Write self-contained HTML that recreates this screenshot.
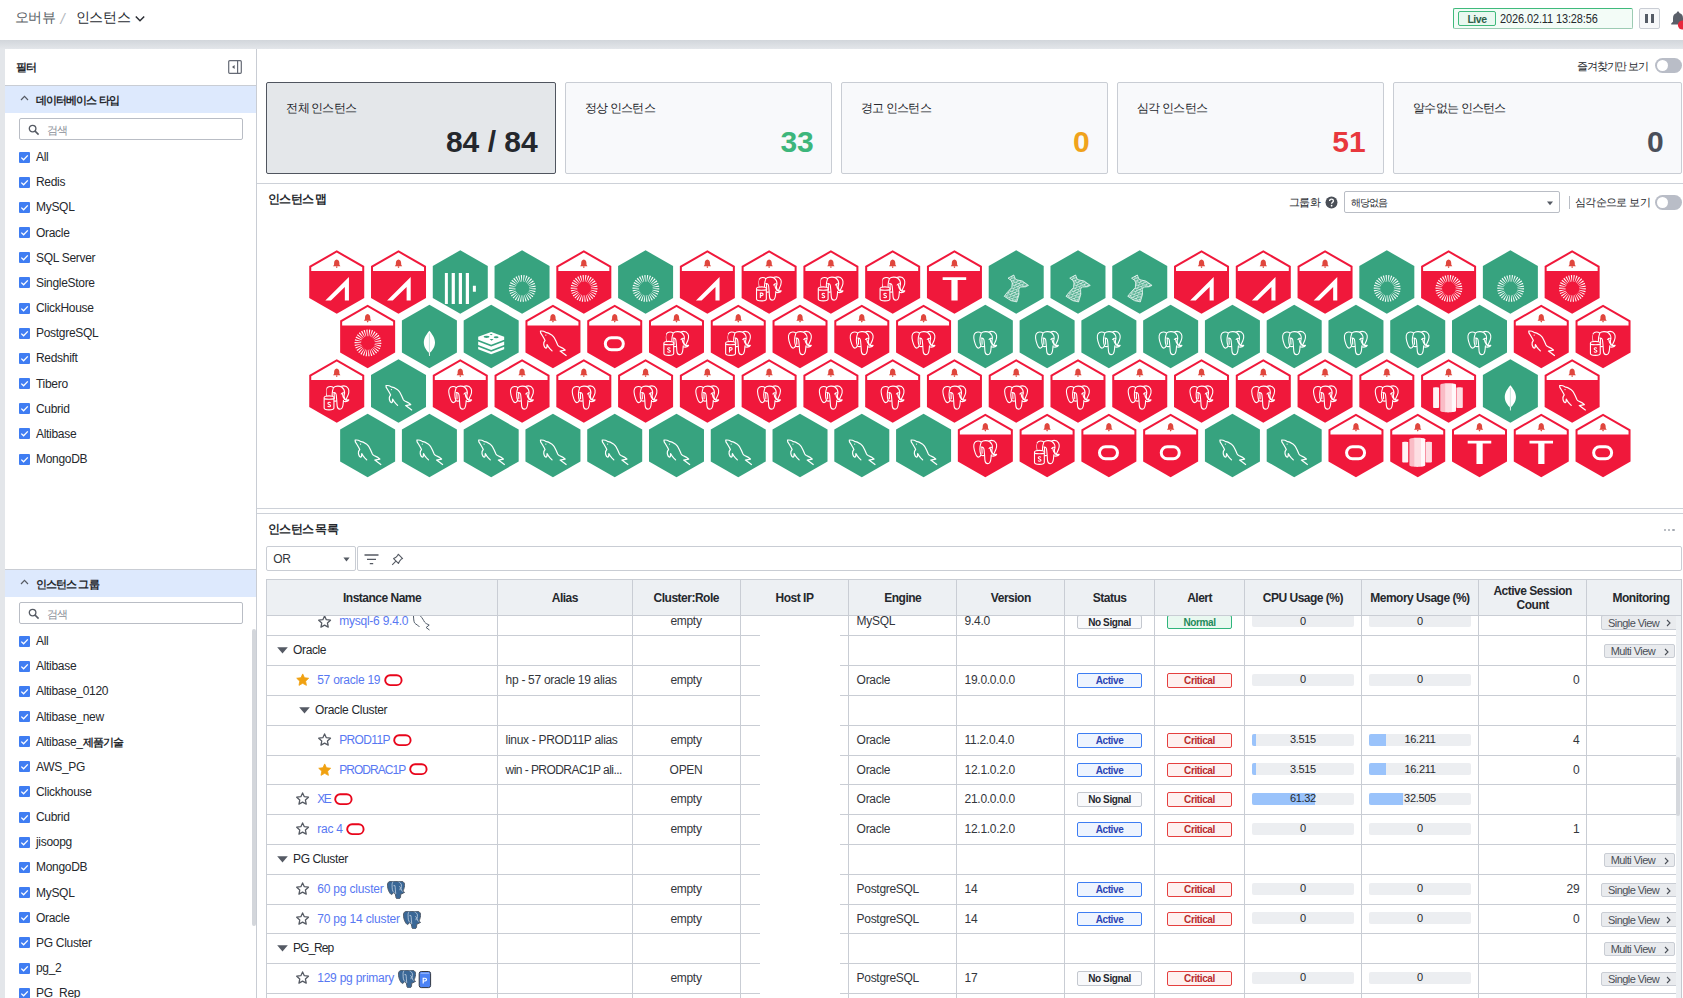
<!DOCTYPE html><html lang="ko"><head><meta charset="utf-8"><title>Instance Overview</title><style>
html,body{margin:0;padding:0}
body{width:1683px;height:998px;overflow:hidden;position:relative;background:#e3e6ea;
 font-family:"Liberation Sans",sans-serif;font-size:12px;color:#25282d;line-height:14px}
div,span,svg{position:absolute;box-sizing:border-box}
span{white-space:nowrap}
.t{letter-spacing:-.25px}
.b{font-weight:700}
#top{left:0;top:0;width:1683px;height:40px;background:#fff}
#shadow{left:0;top:40px;width:1683px;height:9px;background:linear-gradient(#d2d6db,#e3e6ea)}
#side{left:5px;top:49px;width:251px;height:949px;background:#fff}
#sideb{left:256px;top:49px;width:1px;height:949px;background:#c9cdd4}
#main{left:257px;top:49px;width:1426px;height:949px;background:#fff}
.sech{left:5px;width:251px;height:28px;background:#dde9fd;border-top:1px solid #c9cdd4}
.srch{left:19px;width:224px;height:22px;border:1px solid #b9bdc5;border-radius:2px;background:#fff}
.cb{left:19px;width:11px;height:11px;background:#3f7df2;border-radius:1px}
.cl{left:36px;font-size:12px;letter-spacing:-.3px;color:#25282d}
.card{top:82px;height:92px;background:#f8f9fb;border:1px solid #c9cdd4;border-radius:2px}
.card .lb{left:19px;top:18px;font-size:11.5px;letter-spacing:-.75px;color:#25282d}
.card .cv{right:17px;top:42px;font-size:30px;line-height:34px;font-weight:700}
.hl{height:1px;background:#cdd1d8}
.tg{width:27px;height:15px;border-radius:8px;background:#b9bdc7}
.tg i{position:absolute;left:2px;top:2px;width:11px;height:11px;border-radius:6px;background:#fff}

.th{top:579px;height:37px;background:#edf0f3;border-top:1px solid #c9cdd4;border-bottom:1px solid #c9cdd4;border-left:1px solid #c9cdd4}
.th span{left:0;width:100%;text-align:center;font-weight:700;font-size:12px;letter-spacing:-.5px;color:#25282d;white-space:normal}
.vl{width:1px;background:#c9cdd4}
.c{font-size:12px;letter-spacing:-.3px;color:#33363c}
.bd{height:14.5px;border:1px solid;border-radius:2px;font-size:10px;font-weight:700;text-align:center;line-height:14.5px;letter-spacing:-.38px;width:65px}
.bA{border-color:#3d7df2;background:#eef4fe;color:#2b45b2}
.bC{border-color:#e5403f;background:#fef1f0;color:#b82b2d}
.bN{border-color:#c4c8cf;background:#f8f9fb;color:#25282d}
.bO{border-color:#2fb57c;background:#e9f8f0;color:#1f8a5b}
.bar{height:12px;width:102px;background:#eceef1;border-radius:2px;overflow:hidden}
.bar i{position:absolute;left:0;top:0;height:100%;background:#9ac3fb}
.bt{font-size:11px;letter-spacing:-.3px;text-align:center;width:102px;color:#25282d}
.mv{height:14.5px;border:1px solid #c9cdd4;border-radius:2px;background:#e9ebee;font-size:11px;color:#4a4f57;letter-spacing:-.55px}
</style></head><body><div id="top"><span style="left:14.6px;top:8.3px;font-size:14px;line-height:18px;letter-spacing:-.5px;color:#5a5f66">오버뷰</span><span style="left:60.5px;top:10px;font-size:15px;line-height:18px;color:#b4b8be;font-style:italic">/</span><span style="left:75.7px;top:8.3px;font-size:14px;line-height:18px;letter-spacing:-.3px;color:#2a2d33">인스턴스</span><svg width="12" height="8" viewBox="0 0 12 8" style="left:134.3px;top:14.5px"><path d="M1.8 1.5 L6 5.7 L10.2 1.5" fill="none" stroke="#2a2d33" stroke-width="1.5"/></svg><div style="left:1453px;top:8px;width:180px;height:21px;background:#f3fcf7;border:1px solid #3fba7c;border-bottom-color:#9ccbb3;border-right-color:#9ccbb3;border-radius:2px"></div><div style="left:1458px;top:11px;width:38px;height:15px;background:#e9f8f0;border:1px solid #3fba7c;border-radius:2px"></div><span class="b" style="left:1458px;top:11.5px;width:38px;text-align:center;font-size:10.5px;color:#2f5f49;letter-spacing:-.45px">Live</span><span style="left:1500px;top:11.5px;font-size:12px;letter-spacing:-.1px;transform:scaleX(.911);transform-origin:0 0;color:#25282d">2026.02.11 13:28:56</span><div style="left:1639px;top:8px;width:21px;height:21px;background:#f7f8fa;border:1px solid #c9cdd4;border-radius:2px"></div><div style="left:1645px;top:13.5px;width:3.3px;height:9.5px;background:#555b66"></div><div style="left:1650.8px;top:13.5px;width:3.3px;height:9.5px;background:#555b66"></div><svg width="16" height="22" viewBox="0 0 16 22" style="left:1671px;top:10px"><path d="M7 1.6 C7.9 1.6 8.3 2.2 8.3 3 C10.8 3.6 12 5.6 12 8.2 L12 11.8 L13.8 13.6 L13.8 14.4 L0.2 14.4 L0.2 13.6 L2 11.8 L2 8.2 C2 5.6 3.2 3.6 5.7 3 C5.7 2.2 6.1 1.6 7 1.6 Z" fill="#5a5f69"/><circle cx="11.5" cy="15" r="4.6" fill="#e8283c"/></svg></div><div id="shadow"></div><div id="side"></div><div id="sideb"></div><div id="main"></div><span class="b" style="left:16px;top:60px;font-size:11px;letter-spacing:-.7px;color:#25282d">필터</span><svg width="14" height="14" viewBox="0 0 14 14" style="left:228px;top:60px"><rect x=".7" y=".7" width="12.6" height="12.6" rx="1" fill="none" stroke="#656a75" stroke-width="1.2"/><path d="M9.6 .7 V13.3" stroke="#656a75" stroke-width="1.2"/><path d="M6.6 4.9 L4 7 L6.6 9.1 Z" fill="#555a63"/></svg><div class="sech" style="top:85px"></div><svg width="9" height="6" viewBox="0 0 9 6" style="left:19.5px;top:95px"><path d="M1 5 L4.5 1.4 L8 5" fill="none" stroke="#555a63" stroke-width="1.2"/></svg><span class="b" style="left:36px;top:92.5px;font-size:11px;letter-spacing:-.92px;color:#25282d">데이터베이스 타입</span><div class="srch" style="top:118px"><svg width="12" height="12" viewBox="0 0 12 12" style="left:8px;top:4.5px"><circle cx="4.6" cy="4.6" r="3.3" fill="none" stroke="#555a63" stroke-width="1.3"/><path d="M7.1 7.1 L10.6 10.6" stroke="#555a63" stroke-width="1.5"/></svg><span style="left:27px;top:3.5px;color:#8a8f98;font-size:11px;letter-spacing:-1px">검색</span></div><div class="cb" style="top:151.5px"><svg width="11" height="11" viewBox="0 0 11 11" style="left:0;top:0"><path d="M2.3 5.6 L4.6 7.8 L8.8 3.4" fill="none" stroke="#fff" stroke-width="1.3"/></svg></div><span class="cl" style="top:150.0px">All</span><div class="cb" style="top:176.7px"><svg width="11" height="11" viewBox="0 0 11 11" style="left:0;top:0"><path d="M2.3 5.6 L4.6 7.8 L8.8 3.4" fill="none" stroke="#fff" stroke-width="1.3"/></svg></div><span class="cl" style="top:175.2px">Redis</span><div class="cb" style="top:201.8px"><svg width="11" height="11" viewBox="0 0 11 11" style="left:0;top:0"><path d="M2.3 5.6 L4.6 7.8 L8.8 3.4" fill="none" stroke="#fff" stroke-width="1.3"/></svg></div><span class="cl" style="top:200.3px">MySQL</span><div class="cb" style="top:227.0px"><svg width="11" height="11" viewBox="0 0 11 11" style="left:0;top:0"><path d="M2.3 5.6 L4.6 7.8 L8.8 3.4" fill="none" stroke="#fff" stroke-width="1.3"/></svg></div><span class="cl" style="top:225.5px">Oracle</span><div class="cb" style="top:252.2px"><svg width="11" height="11" viewBox="0 0 11 11" style="left:0;top:0"><path d="M2.3 5.6 L4.6 7.8 L8.8 3.4" fill="none" stroke="#fff" stroke-width="1.3"/></svg></div><span class="cl" style="top:250.7px">SQL Server</span><div class="cb" style="top:277.4px"><svg width="11" height="11" viewBox="0 0 11 11" style="left:0;top:0"><path d="M2.3 5.6 L4.6 7.8 L8.8 3.4" fill="none" stroke="#fff" stroke-width="1.3"/></svg></div><span class="cl" style="top:275.9px">SingleStore</span><div class="cb" style="top:302.5px"><svg width="11" height="11" viewBox="0 0 11 11" style="left:0;top:0"><path d="M2.3 5.6 L4.6 7.8 L8.8 3.4" fill="none" stroke="#fff" stroke-width="1.3"/></svg></div><span class="cl" style="top:301.0px">ClickHouse</span><div class="cb" style="top:327.7px"><svg width="11" height="11" viewBox="0 0 11 11" style="left:0;top:0"><path d="M2.3 5.6 L4.6 7.8 L8.8 3.4" fill="none" stroke="#fff" stroke-width="1.3"/></svg></div><span class="cl" style="top:326.2px">PostgreSQL</span><div class="cb" style="top:352.9px"><svg width="11" height="11" viewBox="0 0 11 11" style="left:0;top:0"><path d="M2.3 5.6 L4.6 7.8 L8.8 3.4" fill="none" stroke="#fff" stroke-width="1.3"/></svg></div><span class="cl" style="top:351.4px">Redshift</span><div class="cb" style="top:378.0px"><svg width="11" height="11" viewBox="0 0 11 11" style="left:0;top:0"><path d="M2.3 5.6 L4.6 7.8 L8.8 3.4" fill="none" stroke="#fff" stroke-width="1.3"/></svg></div><span class="cl" style="top:376.5px">Tibero</span><div class="cb" style="top:403.2px"><svg width="11" height="11" viewBox="0 0 11 11" style="left:0;top:0"><path d="M2.3 5.6 L4.6 7.8 L8.8 3.4" fill="none" stroke="#fff" stroke-width="1.3"/></svg></div><span class="cl" style="top:401.7px">Cubrid</span><div class="cb" style="top:428.4px"><svg width="11" height="11" viewBox="0 0 11 11" style="left:0;top:0"><path d="M2.3 5.6 L4.6 7.8 L8.8 3.4" fill="none" stroke="#fff" stroke-width="1.3"/></svg></div><span class="cl" style="top:426.9px">Altibase</span><div class="cb" style="top:453.5px"><svg width="11" height="11" viewBox="0 0 11 11" style="left:0;top:0"><path d="M2.3 5.6 L4.6 7.8 L8.8 3.4" fill="none" stroke="#fff" stroke-width="1.3"/></svg></div><span class="cl" style="top:452.0px">MongoDB</span><div class="sech" style="top:569px"></div><svg width="9" height="6" viewBox="0 0 9 6" style="left:19.5px;top:579px"><path d="M1 5 L4.5 1.4 L8 5" fill="none" stroke="#555a63" stroke-width="1.2"/></svg><span class="b" style="left:36px;top:576.5px;font-size:11px;letter-spacing:-.92px;color:#25282d">인스턴스 그룹</span><div class="srch" style="top:602px"><svg width="12" height="12" viewBox="0 0 12 12" style="left:8px;top:4.5px"><circle cx="4.6" cy="4.6" r="3.3" fill="none" stroke="#555a63" stroke-width="1.3"/><path d="M7.1 7.1 L10.6 10.6" stroke="#555a63" stroke-width="1.5"/></svg><span style="left:27px;top:3.5px;color:#8a8f98;font-size:11px;letter-spacing:-1px">검색</span></div><div class="cb" style="top:635.5px"><svg width="11" height="11" viewBox="0 0 11 11" style="left:0;top:0"><path d="M2.3 5.6 L4.6 7.8 L8.8 3.4" fill="none" stroke="#fff" stroke-width="1.3"/></svg></div><span class="cl" style="top:634.0px">All</span><div class="cb" style="top:660.6px"><svg width="11" height="11" viewBox="0 0 11 11" style="left:0;top:0"><path d="M2.3 5.6 L4.6 7.8 L8.8 3.4" fill="none" stroke="#fff" stroke-width="1.3"/></svg></div><span class="cl" style="top:659.1px">Altibase</span><div class="cb" style="top:685.8px"><svg width="11" height="11" viewBox="0 0 11 11" style="left:0;top:0"><path d="M2.3 5.6 L4.6 7.8 L8.8 3.4" fill="none" stroke="#fff" stroke-width="1.3"/></svg></div><span class="cl" style="top:684.3px">Altibase_0120</span><div class="cb" style="top:711.0px"><svg width="11" height="11" viewBox="0 0 11 11" style="left:0;top:0"><path d="M2.3 5.6 L4.6 7.8 L8.8 3.4" fill="none" stroke="#fff" stroke-width="1.3"/></svg></div><span class="cl" style="top:709.5px">Altibase_new</span><div class="cb" style="top:736.1px"><svg width="11" height="11" viewBox="0 0 11 11" style="left:0;top:0"><path d="M2.3 5.6 L4.6 7.8 L8.8 3.4" fill="none" stroke="#fff" stroke-width="1.3"/></svg></div><span class="cl" style="top:734.6px">Altibase_<b style="font-size:11px;letter-spacing:-.9px">제품기술</b></span><div class="cb" style="top:761.2px"><svg width="11" height="11" viewBox="0 0 11 11" style="left:0;top:0"><path d="M2.3 5.6 L4.6 7.8 L8.8 3.4" fill="none" stroke="#fff" stroke-width="1.3"/></svg></div><span class="cl" style="top:759.8px">AWS_PG</span><div class="cb" style="top:786.4px"><svg width="11" height="11" viewBox="0 0 11 11" style="left:0;top:0"><path d="M2.3 5.6 L4.6 7.8 L8.8 3.4" fill="none" stroke="#fff" stroke-width="1.3"/></svg></div><span class="cl" style="top:784.9px">Clickhouse</span><div class="cb" style="top:811.5px"><svg width="11" height="11" viewBox="0 0 11 11" style="left:0;top:0"><path d="M2.3 5.6 L4.6 7.8 L8.8 3.4" fill="none" stroke="#fff" stroke-width="1.3"/></svg></div><span class="cl" style="top:810.0px">Cubrid</span><div class="cb" style="top:836.7px"><svg width="11" height="11" viewBox="0 0 11 11" style="left:0;top:0"><path d="M2.3 5.6 L4.6 7.8 L8.8 3.4" fill="none" stroke="#fff" stroke-width="1.3"/></svg></div><span class="cl" style="top:835.2px">jisoopg</span><div class="cb" style="top:861.9px"><svg width="11" height="11" viewBox="0 0 11 11" style="left:0;top:0"><path d="M2.3 5.6 L4.6 7.8 L8.8 3.4" fill="none" stroke="#fff" stroke-width="1.3"/></svg></div><span class="cl" style="top:860.4px">MongoDB</span><div class="cb" style="top:887.0px"><svg width="11" height="11" viewBox="0 0 11 11" style="left:0;top:0"><path d="M2.3 5.6 L4.6 7.8 L8.8 3.4" fill="none" stroke="#fff" stroke-width="1.3"/></svg></div><span class="cl" style="top:885.5px">MySQL</span><div class="cb" style="top:912.1px"><svg width="11" height="11" viewBox="0 0 11 11" style="left:0;top:0"><path d="M2.3 5.6 L4.6 7.8 L8.8 3.4" fill="none" stroke="#fff" stroke-width="1.3"/></svg></div><span class="cl" style="top:910.6px">Oracle</span><div class="cb" style="top:937.3px"><svg width="11" height="11" viewBox="0 0 11 11" style="left:0;top:0"><path d="M2.3 5.6 L4.6 7.8 L8.8 3.4" fill="none" stroke="#fff" stroke-width="1.3"/></svg></div><span class="cl" style="top:935.8px">PG Cluster</span><div class="cb" style="top:962.5px"><svg width="11" height="11" viewBox="0 0 11 11" style="left:0;top:0"><path d="M2.3 5.6 L4.6 7.8 L8.8 3.4" fill="none" stroke="#fff" stroke-width="1.3"/></svg></div><span class="cl" style="top:961.0px">pg_2</span><div class="cb" style="top:987.6px"><svg width="11" height="11" viewBox="0 0 11 11" style="left:0;top:0"><path d="M2.3 5.6 L4.6 7.8 L8.8 3.4" fill="none" stroke="#fff" stroke-width="1.3"/></svg></div><span class="cl" style="top:986.1px">PG_Rep</span><div style="left:252.3px;top:629px;width:3.6px;height:297px;border-radius:2px;background:#d3d6db"></div><span style="right:35px;top:59px;font-size:10.5px;letter-spacing:-1.1px;color:#25282d">즐겨찾기만 보기</span><div class="tg" style="left:1655px;top:58px"><i></i></div><div class="card" style="left:266.3px;width:289.4px;background:#e4e7ea;border-color:#50555f;"><span class="lb">전체 인스턴스</span><span class="cv" style="color:#25282d">84 / 84</span></div><div class="card" style="left:565px;width:266.8px;"><span class="lb">정상 인스턴스</span><span class="cv" style="color:#3db67b">33</span></div><div class="card" style="left:841px;width:266.8px;"><span class="lb">경고 인스턴스</span><span class="cv" style="color:#f0a31c">0</span></div><div class="card" style="left:1117.2px;width:266.5px;"><span class="lb">심각 인스턴스</span><span class="cv" style="color:#e8383d">51</span></div><div class="card" style="left:1393.2px;width:288.5px;"><span class="lb">알수없는 인스턴스</span><span class="cv" style="color:#4a4f5a">0</span></div><div class="hl" style="left:257px;top:183px;width:1426px"></div><span class="b" style="left:268px;top:192px;font-size:11.5px;letter-spacing:-.75px">인스턴스 맵</span><span style="right:363px;top:195px;font-size:11px;letter-spacing:-.6px">그룹화</span><svg width="13" height="13" viewBox="0 0 13 13" style="left:1325.4px;top:195.5px"><circle cx="6.5" cy="6.5" r="6" fill="#4a4f57"/><path d="M4.6 5.1 C4.6 3.9 5.4 3.2 6.5 3.2 C7.6 3.2 8.4 3.9 8.4 4.9 C8.4 6.2 6.6 6.3 6.6 7.7" fill="none" stroke="#fff" stroke-width="1.3"/><circle cx="6.6" cy="9.7" r=".85" fill="#fff"/></svg><div style="left:1344px;top:191px;width:215.6px;height:22px;border:1px solid #b9bdc5;border-radius:2px;background:#fff"><span style="left:5.5px;top:3.5px;font-size:10px;letter-spacing:-.7px;color:#25282d">해당없음</span><svg width="8" height="5" viewBox="0 0 8 5" style="left:200.5px;top:8.5px"><path d="M1 .6 H7 L4 4.2 Z" fill="#555a63"/></svg></div><div style="left:1569px;top:196px;width:1px;height:13px;background:#b9bdc5"></div><span style="right:33px;top:195px;font-size:10.5px;letter-spacing:-.6px">심각순으로 보기</span><div class="tg" style="left:1655.3px;top:194.5px"><i></i></div><div class="hl" style="left:257px;top:508px;width:1426px"></div><div class="hl" style="left:257px;top:513px;width:1426px"></div><svg width="1683" height="998" viewBox="0 0 1683 998" style="left:0;top:0"><defs><pattern id="mesh" width="3.3" height="3.3" patternUnits="userSpaceOnUse" patternTransform="rotate(24)"><rect width="3.3" height="3.3" fill="#fff" fill-opacity=".16"/><path d="M0,0 H3.3 M0,0 V3.3 M0,3.3 L3.3,0" stroke="#fff" stroke-width=".62" stroke-opacity=".95"/></pattern><g id="hR"><polygon points="0,-31.75 27.50,-15.88 27.50,15.88 0,31.75 -27.50,15.88 -27.50,-15.88" fill="#f0183b"/><polygon points="0,-29.44 25.50,-14.72 25.50,-11.1 -25.50,-11.1 -25.50,-14.72" fill="#fff"/><path d="M0,-22.6 C1.9,-22.4 2.6,-20.8 2.6,-19.2 L2.7,-17.3 L3.7,-15.7 L-3.7,-15.7 L-2.7,-17.3 L-2.6,-19.2 C-2.6,-20.8 -1.9,-22.4 0,-22.6 Z" fill="#e0463d"/><circle cx="0" cy="-14.9" r=".8" fill="#e0463d"/></g><g id="hG"><polygon points="0,-31.75 27.50,-15.88 27.50,15.88 0,31.75 -27.50,15.88 -27.50,-15.88" fill="#37a37f"/></g><g id="altiR"><path d="M-11.4,18.6 L12.2,-5.1 L12.2,18.6 L8.1,18.6 L8.1,5.1 L-5.8,18.6 Z" fill="#fff"/></g><g id="altiG"><path d="M-11.4,18.6 L12.2,-5.1 L12.2,18.6 L8.1,18.6 L8.1,5.1 L-5.8,18.6 Z" fill="#fff"/></g><g id="clickR"><path d="M-15.4,-9 h3v31h-3z M-8.6,-9 h3.2v31h-3.2z M-1.5,-9 h3.2v31h-3.2z M5.5,-9 h3.2v31h-3.2z M12.6,3.8 h3v5.9h-3z" fill="#fff"/></g><g id="clickG"><path d="M-15.4,-9 h3v31h-3z M-8.6,-9 h3.2v31h-3.2z M-1.5,-9 h3.2v31h-3.2z M5.5,-9 h3.2v31h-3.2z M12.6,3.8 h3v5.9h-3z" fill="#fff"/></g><g id="cubridR"><path d="M7.09,6.85L13.67,7.49L13.71,6.21L7.10,6.45ZM6.86,8.26L13.17,10.25L13.47,9.01L6.95,7.87ZM6.34,9.58L12.09,12.84L12.65,11.69L6.51,9.22ZM5.56,10.77L10.51,15.15L11.29,14.14L5.80,10.45ZM4.54,11.77L8.48,17.09L9.45,16.26L4.85,11.51ZM3.35,12.53L6.09,18.55L7.21,17.95L3.70,12.34ZM2.01,13.03L3.44,19.49L4.67,19.13L2.40,12.92ZM0.61,13.25L0.66,19.86L1.94,19.76L1.01,13.22ZM-0.81,13.16L-2.13,19.64L-0.87,19.81L-0.42,13.22ZM-2.18,12.78L-4.82,18.85L-3.62,19.28L-1.81,12.92ZM-3.45,12.13L-7.29,17.51L-6.20,18.19L-3.10,12.34ZM-4.54,11.23L-9.42,15.69L-8.50,16.58L-4.26,11.50ZM-5.43,10.11L-11.13,13.47L-10.41,14.53L-5.21,10.45ZM-6.07,8.84L-12.34,10.94L-11.86,12.12L-5.92,9.21ZM-6.43,7.47L-13.00,8.21L-12.77,9.47L-6.36,7.86ZM-6.49,6.05L-13.07,5.41L-13.11,6.69L-6.50,6.45ZM-6.26,4.64L-12.57,2.65L-12.87,3.89L-6.35,5.03ZM-5.74,3.32L-11.49,0.06L-12.05,1.21L-5.91,3.68ZM-4.96,2.13L-9.91,-2.25L-10.69,-1.24L-5.20,2.45ZM-3.94,1.13L-7.88,-4.19L-8.85,-3.36L-4.25,1.39ZM-2.75,0.37L-5.49,-5.65L-6.61,-5.05L-3.10,0.56ZM-1.41,-0.13L-2.84,-6.59L-4.07,-6.23L-1.80,-0.02ZM-0.01,-0.35L-0.06,-6.96L-1.34,-6.86L-0.41,-0.32ZM1.41,-0.26L2.73,-6.74L1.47,-6.91L1.02,-0.32ZM2.78,0.12L5.42,-5.95L4.22,-6.38L2.41,-0.02ZM4.05,0.77L7.89,-4.61L6.80,-5.29L3.70,0.56ZM5.14,1.67L10.02,-2.79L9.10,-3.68L4.86,1.40ZM6.03,2.79L11.73,-0.57L11.01,-1.63L5.81,2.45ZM6.67,4.06L12.94,1.96L12.46,0.78L6.52,3.69ZM7.03,5.43L13.60,4.69L13.37,3.43L6.96,5.04Z" fill="#fff"/></g><g id="cubridG"><path d="M7.09,6.85L13.67,7.49L13.71,6.21L7.10,6.45ZM6.86,8.26L13.17,10.25L13.47,9.01L6.95,7.87ZM6.34,9.58L12.09,12.84L12.65,11.69L6.51,9.22ZM5.56,10.77L10.51,15.15L11.29,14.14L5.80,10.45ZM4.54,11.77L8.48,17.09L9.45,16.26L4.85,11.51ZM3.35,12.53L6.09,18.55L7.21,17.95L3.70,12.34ZM2.01,13.03L3.44,19.49L4.67,19.13L2.40,12.92ZM0.61,13.25L0.66,19.86L1.94,19.76L1.01,13.22ZM-0.81,13.16L-2.13,19.64L-0.87,19.81L-0.42,13.22ZM-2.18,12.78L-4.82,18.85L-3.62,19.28L-1.81,12.92ZM-3.45,12.13L-7.29,17.51L-6.20,18.19L-3.10,12.34ZM-4.54,11.23L-9.42,15.69L-8.50,16.58L-4.26,11.50ZM-5.43,10.11L-11.13,13.47L-10.41,14.53L-5.21,10.45ZM-6.07,8.84L-12.34,10.94L-11.86,12.12L-5.92,9.21ZM-6.43,7.47L-13.00,8.21L-12.77,9.47L-6.36,7.86ZM-6.49,6.05L-13.07,5.41L-13.11,6.69L-6.50,6.45ZM-6.26,4.64L-12.57,2.65L-12.87,3.89L-6.35,5.03ZM-5.74,3.32L-11.49,0.06L-12.05,1.21L-5.91,3.68ZM-4.96,2.13L-9.91,-2.25L-10.69,-1.24L-5.20,2.45ZM-3.94,1.13L-7.88,-4.19L-8.85,-3.36L-4.25,1.39ZM-2.75,0.37L-5.49,-5.65L-6.61,-5.05L-3.10,0.56ZM-1.41,-0.13L-2.84,-6.59L-4.07,-6.23L-1.80,-0.02ZM-0.01,-0.35L-0.06,-6.96L-1.34,-6.86L-0.41,-0.32ZM1.41,-0.26L2.73,-6.74L1.47,-6.91L1.02,-0.32ZM2.78,0.12L5.42,-5.95L4.22,-6.38L2.41,-0.02ZM4.05,0.77L7.89,-4.61L6.80,-5.29L3.70,0.56ZM5.14,1.67L10.02,-2.79L9.10,-3.68L4.86,1.40ZM6.03,2.79L11.73,-0.57L11.01,-1.63L5.81,2.45ZM6.67,4.06L12.94,1.96L12.46,0.78L6.52,3.69ZM7.03,5.43L13.60,4.69L13.37,3.43L6.96,5.04Z" fill="#fff"/></g><g id="mongoR"><path d="M0,-5.8 C2.2,-3 5.6,1 5.6,6 C5.6,11 2.4,14.6 .5,16.2 L.4,19.6 L-.4,19.6 L-.5,16.2 C-2.4,14.6 -5.6,11 -5.6,6 C-5.6,1 -2.2,-3 0,-5.8 Z" fill="#fff"/><path d="M0,-3 V16" stroke="#f0183b" stroke-width=".5" opacity=".55"/></g><g id="mongoG"><path d="M0,-5.8 C2.2,-3 5.6,1 5.6,6 C5.6,11 2.4,14.6 .5,16.2 L.4,19.6 L-.4,19.6 L-.5,16.2 C-2.4,14.6 -5.6,11 -5.6,6 C-5.6,1 -2.2,-3 0,-5.8 Z" fill="#fff"/><path d="M0,-3 V16" stroke="#37a37f" stroke-width=".5" opacity=".55"/></g><g id="redisR"><path d="M-13,.2 L0,-4.6 L13,.2 L13,3.2 L0,8.2 L-13,3.2 Z" fill="#fff"/><path d="M-13,5 L0,10 L13,5 L13,8.4 L0,13.4 L-13,8.4 Z" fill="#fff"/><path d="M-13,10.2 L0,15.2 L13,10.2 L13,12.8 L0,17.8 L-13,12.8 Z" fill="#fff"/><ellipse cx="-4.6" cy=".3" rx="3" ry="1.15" fill="#f0183b"/><ellipse cx="5" cy=".8" rx="2.4" ry="1" fill="#f0183b"/><path d="M-1.6,-2.6 L1.6,-2.6 L0,-1.2 Z M-1.5,2.4 L2.4,2.6 L.4,4.2 Z" fill="#f0183b"/></g><g id="redisG"><path d="M-13,.2 L0,-4.6 L13,.2 L13,3.2 L0,8.2 L-13,3.2 Z" fill="#fff"/><path d="M-13,5 L0,10 L13,5 L13,8.4 L0,13.4 L-13,8.4 Z" fill="#fff"/><path d="M-13,10.2 L0,15.2 L13,10.2 L13,12.8 L0,17.8 L-13,12.8 Z" fill="#fff"/><ellipse cx="-4.6" cy=".3" rx="3" ry="1.15" fill="#37a37f"/><ellipse cx="5" cy=".8" rx="2.4" ry="1" fill="#37a37f"/><path d="M-1.6,-2.6 L1.6,-2.6 L0,-1.2 Z M-1.5,2.4 L2.4,2.6 L.4,4.2 Z" fill="#37a37f"/></g><g id="mysqlR"><path d="M-12.5,-5.4 C-10.5,-5.8 -8.5,-5 -7.3,-4.2 C-5,-4 -3,-2.8 -1.3,-1.6 C0,-.4 1,.6 1.3,1.2 L3.1,4.8 L4.75,8.4 C5.2,9.3 5.8,9.7 6.35,10 L9.6,11.6 L12.2,13.6 L7.15,14.6 L13.2,19 M-12.5,-5.4 L-12.3,-3.6 L-10.5,-.8 L-8.9,2 L-7.9,4 C-8.6,5 -9.1,5.6 -9.1,6.4 C-9.3,7.5 -9.2,8.4 -8.9,9.2 C-8.5,10.4 -8,11.2 -7.3,11.6 C-6.8,11.7 -6.3,11.3 -6.1,10.8 L-5.9,8 L-4.5,10.4 L-2.9,12.4 L-.9,14.4" fill="none" stroke="#fff" stroke-width="1.2" stroke-linejoin="round" stroke-linecap="round"/><circle cx="-7.1" cy="-1.4" r=".6" fill="#fff"/></g><g id="mysqlG"><path d="M-12.5,-5.4 C-10.5,-5.8 -8.5,-5 -7.3,-4.2 C-5,-4 -3,-2.8 -1.3,-1.6 C0,-.4 1,.6 1.3,1.2 L3.1,4.8 L4.75,8.4 C5.2,9.3 5.8,9.7 6.35,10 L9.6,11.6 L12.2,13.6 L7.15,14.6 L13.2,19 M-12.5,-5.4 L-12.3,-3.6 L-10.5,-.8 L-8.9,2 L-7.9,4 C-8.6,5 -9.1,5.6 -9.1,6.4 C-9.3,7.5 -9.2,8.4 -8.9,9.2 C-8.5,10.4 -8,11.2 -7.3,11.6 C-6.8,11.7 -6.3,11.3 -6.1,10.8 L-5.9,8 L-4.5,10.4 L-2.9,12.4 L-.9,14.4" fill="none" stroke="#fff" stroke-width="1.2" stroke-linejoin="round" stroke-linecap="round"/><circle cx="-7.1" cy="-1.4" r=".6" fill="#fff"/></g><g id="oracleR"><rect x="-9.4" y="1.2" width="18" height="12" rx="6" fill="none" stroke="#fff" stroke-width="3"/></g><g id="oracleG"><rect x="-9.4" y="1.2" width="18" height="12" rx="6" fill="none" stroke="#fff" stroke-width="3"/></g><g id="pgR"><path transform="translate(0,6.6) scale(.955) translate(0,-6.6)" d="M-4.3,-3.9 C-6,-5.5 -9.6,-5.7 -11.3,-3.2 C-12.6,-1.2 -12,3.5 -10.4,8 C-9.3,11 -7.8,12.4 -6.4,11.6 C-5.2,10.9 -4.8,9.9 -4.6,9.4 C-5.7,6.5 -6.2,1.5 -4.3,-3.9 Z M-4.3,-3.9 C-2.2,-5.7 2.2,-5.9 4.6,-4.3 C6.6,-2.9 7.5,-0.4 7.4,2 M-4.6,9.4 C-3.4,10.7 -1.6,10.5 -0.8,9.7 L-0.5,14.5 C-0.3,17.5 0.8,18.7 2.5,18.7 C4.7,18.7 5.6,16.4 5.9,13 L6.2,9.4 M-4.1,1.3 C-2.6,.9 -1.4,2.3 -1.3,4.4 L-.8,9.7 M-3.6,2 L-3.4,7.8 M3.9,2.8 C5,1.4 6.6,1.5 7.4,2 C6.4,4.4 7.1,7.4 8.6,9.2 M5.2,2.9 C5.2,4.6 6,6.8 7.4,8.6 M3.4,-5 C6,-5.9 9.6,-5.7 11.2,-3 C12.4,-.8 11.4,3.6 9.6,7 C9,8.2 8.7,8.8 8.6,9.2 L11.8,9 C10.8,10.8 8,11.3 6.2,10.3" fill="none" stroke="#fff" stroke-width="1.15" stroke-linejoin="round" stroke-linecap="round"/></g><g id="pgG"><path transform="translate(0,6.6) scale(.955) translate(0,-6.6)" d="M-4.3,-3.9 C-6,-5.5 -9.6,-5.7 -11.3,-3.2 C-12.6,-1.2 -12,3.5 -10.4,8 C-9.3,11 -7.8,12.4 -6.4,11.6 C-5.2,10.9 -4.8,9.9 -4.6,9.4 C-5.7,6.5 -6.2,1.5 -4.3,-3.9 Z M-4.3,-3.9 C-2.2,-5.7 2.2,-5.9 4.6,-4.3 C6.6,-2.9 7.5,-0.4 7.4,2 M-4.6,9.4 C-3.4,10.7 -1.6,10.5 -0.8,9.7 L-0.5,14.5 C-0.3,17.5 0.8,18.7 2.5,18.7 C4.7,18.7 5.6,16.4 5.9,13 L6.2,9.4 M-4.1,1.3 C-2.6,.9 -1.4,2.3 -1.3,4.4 L-.8,9.7 M-3.6,2 L-3.4,7.8 M3.9,2.8 C5,1.4 6.6,1.5 7.4,2 C6.4,4.4 7.1,7.4 8.6,9.2 M5.2,2.9 C5.2,4.6 6,6.8 7.4,8.6 M3.4,-5 C6,-5.9 9.6,-5.7 11.2,-3 C12.4,-.8 11.4,3.6 9.6,7 C9,8.2 8.7,8.8 8.6,9.2 L11.8,9 C10.8,10.8 8,11.3 6.2,10.3" fill="none" stroke="#fff" stroke-width="1.15" stroke-linejoin="round" stroke-linecap="round"/></g><g id="pgSR"><g transform="translate(.8,0)"><path transform="translate(0,6.6) scale(.955) translate(0,-6.6)" d="M-4.3,-3.9 C-6,-5.5 -9.6,-5.7 -11.3,-3.2 C-12.6,-1.2 -12,3.5 -10.4,8 C-9.3,11 -7.8,12.4 -6.4,11.6 C-5.2,10.9 -4.8,9.9 -4.6,9.4 C-5.7,6.5 -6.2,1.5 -4.3,-3.9 Z M-4.3,-3.9 C-2.2,-5.7 2.2,-5.9 4.6,-4.3 C6.6,-2.9 7.5,-0.4 7.4,2 M-4.6,9.4 C-3.4,10.7 -1.6,10.5 -0.8,9.7 L-0.5,14.5 C-0.3,17.5 0.8,18.7 2.5,18.7 C4.7,18.7 5.6,16.4 5.9,13 L6.2,9.4 M-4.1,1.3 C-2.6,.9 -1.4,2.3 -1.3,4.4 L-.8,9.7 M-3.6,2 L-3.4,7.8 M3.9,2.8 C5,1.4 6.6,1.5 7.4,2 C6.4,4.4 7.1,7.4 8.6,9.2 M5.2,2.9 C5.2,4.6 6,6.8 7.4,8.6 M3.4,-5 C6,-5.9 9.6,-5.7 11.2,-3 C12.4,-.8 11.4,3.6 9.6,7 C9,8.2 8.7,8.8 8.6,9.2 L11.8,9 C10.8,10.8 8,11.3 6.2,10.3" fill="none" stroke="#fff" stroke-width="1.15" stroke-linejoin="round" stroke-linecap="round"/></g><path d="M-11.3,-3 C-12,-1 -12,2 -11.6,5.4" fill="none" stroke="#f0183b" stroke-width="2.2"/><path d="M-12.6,6.4 C-12.6,5.2 -10,4.9 -7.7,4.9 C-5.4,4.9 -2.8,5.2 -2.8,6.4 L-2.8,17 C-2.8,18.4 -5.4,18.9 -7.7,18.9 C-10,18.9 -12.6,18.4 -12.6,17 Z" fill="#f0183b" stroke="#fff" stroke-width="1.1"/><path d="M-12.6,7.9 C-10,8.3 -5.4,8.3 -2.8,7.9" fill="none" stroke="#fff" stroke-width="1.1"/><path d="M-6.2,11.9 C-6.8,11 -8.9,11 -8.9,12.3 C-8.9,13.6 -6.1,13.2 -6.1,14.7 C-6.1,16 -8.5,16 -9.1,15" fill="none" stroke="#fff" stroke-width="1.05"/></g><g id="pgSG"><g transform="translate(.8,0)"><path transform="translate(0,6.6) scale(.955) translate(0,-6.6)" d="M-4.3,-3.9 C-6,-5.5 -9.6,-5.7 -11.3,-3.2 C-12.6,-1.2 -12,3.5 -10.4,8 C-9.3,11 -7.8,12.4 -6.4,11.6 C-5.2,10.9 -4.8,9.9 -4.6,9.4 C-5.7,6.5 -6.2,1.5 -4.3,-3.9 Z M-4.3,-3.9 C-2.2,-5.7 2.2,-5.9 4.6,-4.3 C6.6,-2.9 7.5,-0.4 7.4,2 M-4.6,9.4 C-3.4,10.7 -1.6,10.5 -0.8,9.7 L-0.5,14.5 C-0.3,17.5 0.8,18.7 2.5,18.7 C4.7,18.7 5.6,16.4 5.9,13 L6.2,9.4 M-4.1,1.3 C-2.6,.9 -1.4,2.3 -1.3,4.4 L-.8,9.7 M-3.6,2 L-3.4,7.8 M3.9,2.8 C5,1.4 6.6,1.5 7.4,2 C6.4,4.4 7.1,7.4 8.6,9.2 M5.2,2.9 C5.2,4.6 6,6.8 7.4,8.6 M3.4,-5 C6,-5.9 9.6,-5.7 11.2,-3 C12.4,-.8 11.4,3.6 9.6,7 C9,8.2 8.7,8.8 8.6,9.2 L11.8,9 C10.8,10.8 8,11.3 6.2,10.3" fill="none" stroke="#fff" stroke-width="1.15" stroke-linejoin="round" stroke-linecap="round"/></g><path d="M-11.3,-3 C-12,-1 -12,2 -11.6,5.4" fill="none" stroke="#37a37f" stroke-width="2.2"/><path d="M-12.6,6.4 C-12.6,5.2 -10,4.9 -7.7,4.9 C-5.4,4.9 -2.8,5.2 -2.8,6.4 L-2.8,17 C-2.8,18.4 -5.4,18.9 -7.7,18.9 C-10,18.9 -12.6,18.4 -12.6,17 Z" fill="#37a37f" stroke="#fff" stroke-width="1.1"/><path d="M-12.6,7.9 C-10,8.3 -5.4,8.3 -2.8,7.9" fill="none" stroke="#fff" stroke-width="1.1"/><path d="M-6.2,11.9 C-6.8,11 -8.9,11 -8.9,12.3 C-8.9,13.6 -6.1,13.2 -6.1,14.7 C-6.1,16 -8.5,16 -9.1,15" fill="none" stroke="#fff" stroke-width="1.05"/></g><g id="pgPR"><g transform="translate(.8,0)"><path transform="translate(0,6.6) scale(.955) translate(0,-6.6)" d="M-4.3,-3.9 C-6,-5.5 -9.6,-5.7 -11.3,-3.2 C-12.6,-1.2 -12,3.5 -10.4,8 C-9.3,11 -7.8,12.4 -6.4,11.6 C-5.2,10.9 -4.8,9.9 -4.6,9.4 C-5.7,6.5 -6.2,1.5 -4.3,-3.9 Z M-4.3,-3.9 C-2.2,-5.7 2.2,-5.9 4.6,-4.3 C6.6,-2.9 7.5,-0.4 7.4,2 M-4.6,9.4 C-3.4,10.7 -1.6,10.5 -0.8,9.7 L-0.5,14.5 C-0.3,17.5 0.8,18.7 2.5,18.7 C4.7,18.7 5.6,16.4 5.9,13 L6.2,9.4 M-4.1,1.3 C-2.6,.9 -1.4,2.3 -1.3,4.4 L-.8,9.7 M-3.6,2 L-3.4,7.8 M3.9,2.8 C5,1.4 6.6,1.5 7.4,2 C6.4,4.4 7.1,7.4 8.6,9.2 M5.2,2.9 C5.2,4.6 6,6.8 7.4,8.6 M3.4,-5 C6,-5.9 9.6,-5.7 11.2,-3 C12.4,-.8 11.4,3.6 9.6,7 C9,8.2 8.7,8.8 8.6,9.2 L11.8,9 C10.8,10.8 8,11.3 6.2,10.3" fill="none" stroke="#fff" stroke-width="1.15" stroke-linejoin="round" stroke-linecap="round"/></g><path d="M-11.3,-3 C-12,-1 -12,2 -11.6,5.4" fill="none" stroke="#f0183b" stroke-width="2.2"/><path d="M-12.6,6.4 C-12.6,5.2 -10,4.9 -7.7,4.9 C-5.4,4.9 -2.8,5.2 -2.8,6.4 L-2.8,17 C-2.8,18.4 -5.4,18.9 -7.7,18.9 C-10,18.9 -12.6,18.4 -12.6,17 Z" fill="#f0183b" stroke="#fff" stroke-width="1.1"/><path d="M-12.6,7.9 C-10,8.3 -5.4,8.3 -2.8,7.9" fill="none" stroke="#fff" stroke-width="1.1"/><path d="M-8.8,15.9 L-8.8,11.1 L-7.4,11.1 C-5.6,11.1 -5.6,13.6 -7.4,13.6 L-8.8,13.6" fill="none" stroke="#fff" stroke-width="1.05"/></g><g id="pgPG"><g transform="translate(.8,0)"><path transform="translate(0,6.6) scale(.955) translate(0,-6.6)" d="M-4.3,-3.9 C-6,-5.5 -9.6,-5.7 -11.3,-3.2 C-12.6,-1.2 -12,3.5 -10.4,8 C-9.3,11 -7.8,12.4 -6.4,11.6 C-5.2,10.9 -4.8,9.9 -4.6,9.4 C-5.7,6.5 -6.2,1.5 -4.3,-3.9 Z M-4.3,-3.9 C-2.2,-5.7 2.2,-5.9 4.6,-4.3 C6.6,-2.9 7.5,-0.4 7.4,2 M-4.6,9.4 C-3.4,10.7 -1.6,10.5 -0.8,9.7 L-0.5,14.5 C-0.3,17.5 0.8,18.7 2.5,18.7 C4.7,18.7 5.6,16.4 5.9,13 L6.2,9.4 M-4.1,1.3 C-2.6,.9 -1.4,2.3 -1.3,4.4 L-.8,9.7 M-3.6,2 L-3.4,7.8 M3.9,2.8 C5,1.4 6.6,1.5 7.4,2 C6.4,4.4 7.1,7.4 8.6,9.2 M5.2,2.9 C5.2,4.6 6,6.8 7.4,8.6 M3.4,-5 C6,-5.9 9.6,-5.7 11.2,-3 C12.4,-.8 11.4,3.6 9.6,7 C9,8.2 8.7,8.8 8.6,9.2 L11.8,9 C10.8,10.8 8,11.3 6.2,10.3" fill="none" stroke="#fff" stroke-width="1.15" stroke-linejoin="round" stroke-linecap="round"/></g><path d="M-11.3,-3 C-12,-1 -12,2 -11.6,5.4" fill="none" stroke="#37a37f" stroke-width="2.2"/><path d="M-12.6,6.4 C-12.6,5.2 -10,4.9 -7.7,4.9 C-5.4,4.9 -2.8,5.2 -2.8,6.4 L-2.8,17 C-2.8,18.4 -5.4,18.9 -7.7,18.9 C-10,18.9 -12.6,18.4 -12.6,17 Z" fill="#37a37f" stroke="#fff" stroke-width="1.1"/><path d="M-12.6,7.9 C-10,8.3 -5.4,8.3 -2.8,7.9" fill="none" stroke="#fff" stroke-width="1.1"/><path d="M-8.8,15.9 L-8.8,11.1 L-7.4,11.1 C-5.6,11.1 -5.6,13.6 -7.4,13.6 L-8.8,13.6" fill="none" stroke="#fff" stroke-width="1.05"/></g><g id="tiberoR"><path d="M-11.8,-4.85 H11.75 V-2 H3.2 V18.6 H-3.05 V-2 H-11.8 Z" fill="#fff"/></g><g id="tiberoG"><path d="M-11.8,-4.85 H11.75 V-2 H3.2 V18.6 H-3.05 V-2 H-11.8 Z" fill="#fff"/></g><g id="mssqlR"><path d="M-8.2,-3.8 L-2.4,-7 L-1.2,-3.8 L.4,-2.2 L6.1,-1 L12.3,3.4 L9.3,4.8 L3.6,5.1 L2.6,7.5 L2.8,12.3 L.6,19.9 L-5.2,18.7 L-12,14.3 L-9.2,10.7 L-4.4,5.5 L-4,1 L-5.2,-1.8 Z" fill="url(#mesh)" stroke="#fff" stroke-width=".8" stroke-opacity=".9"/></g><g id="mssqlG"><path d="M-8.2,-3.8 L-2.4,-7 L-1.2,-3.8 L.4,-2.2 L6.1,-1 L12.3,3.4 L9.3,4.8 L3.6,5.1 L2.6,7.5 L2.8,12.3 L.6,19.9 L-5.2,18.7 L-12,14.3 L-9.2,10.7 L-4.4,5.5 L-4,1 L-5.2,-1.8 Z" fill="url(#mesh)" stroke="#fff" stroke-width=".8" stroke-opacity=".9"/></g><g id="redshiftR"><path d="M-15.5,-3.2 C-15.5,-3.9 -9.5,-3.9 -9.5,-3.2 V16.4 C-9.5,17.1 -15.5,17.1 -15.5,16.4 Z" fill="#fff" fill-opacity=".95"/><path d="M7.8,-3.2 C7.8,-3.9 14.2,-3.9 14.2,-3.2 V16.4 C14.2,17.1 7.8,17.1 7.8,16.4 Z" fill="#fff" fill-opacity=".86"/><path d="M-8.3,-6.3 C-8.3,-8.4 7.4,-8.4 7.4,-6.3 V19.8 C7.4,21.9 -8.3,21.9 -8.3,19.8 Z" fill="#fff" fill-opacity=".86"/><path d="M-8.3,-6.3 C-8.3,-7.5 -5.6,-7.9 -3.4,-7.9 V21.4 C-5.6,21.4 -8.3,21 -8.3,19.8 Z" fill="#f0183b" fill-opacity=".17"/><path d="M3.2,-7.6 C5.4,-7.4 7.4,-7 7.4,-6.3 V19.8 C7.4,20.5 5.4,20.9 3.2,21.1 Z" fill="#fff" fill-opacity=".8"/></g><g id="redshiftG"><path d="M-15.5,-3.2 C-15.5,-3.9 -9.5,-3.9 -9.5,-3.2 V16.4 C-9.5,17.1 -15.5,17.1 -15.5,16.4 Z" fill="#fff" fill-opacity=".95"/><path d="M7.8,-3.2 C7.8,-3.9 14.2,-3.9 14.2,-3.2 V16.4 C14.2,17.1 7.8,17.1 7.8,16.4 Z" fill="#fff" fill-opacity=".86"/><path d="M-8.3,-6.3 C-8.3,-8.4 7.4,-8.4 7.4,-6.3 V19.8 C7.4,21.9 -8.3,21.9 -8.3,19.8 Z" fill="#fff" fill-opacity=".86"/><path d="M-8.3,-6.3 C-8.3,-7.5 -5.6,-7.9 -3.4,-7.9 V21.4 C-5.6,21.4 -8.3,21 -8.3,19.8 Z" fill="#f0183b" fill-opacity=".17"/><path d="M3.2,-7.6 C5.4,-7.4 7.4,-7 7.4,-6.3 V19.8 C7.4,20.5 5.4,20.9 3.2,21.1 Z" fill="#fff" fill-opacity=".8"/></g></defs><g transform="translate(336.74,282.00)"><use href="#hR"/><use href="#altiR"/></g><g transform="translate(398.51,282.00)"><use href="#hR"/><use href="#altiR"/></g><g transform="translate(460.28,282.00)"><use href="#hG"/><use href="#clickG"/></g><g transform="translate(522.05,282.00)"><use href="#hG"/><use href="#cubridG"/></g><g transform="translate(583.82,282.00)"><use href="#hR"/><use href="#cubridR"/></g><g transform="translate(645.59,282.00)"><use href="#hG"/><use href="#cubridG"/></g><g transform="translate(707.36,282.00)"><use href="#hR"/><use href="#altiR"/></g><g transform="translate(769.13,282.00)"><use href="#hR"/><use href="#pgPR"/></g><g transform="translate(830.90,282.00)"><use href="#hR"/><use href="#pgSR"/></g><g transform="translate(892.67,282.00)"><use href="#hR"/><use href="#pgSR"/></g><g transform="translate(954.44,282.00)"><use href="#hR"/><use href="#tiberoR"/></g><g transform="translate(1016.21,282.00)"><use href="#hG"/><use href="#mssqlG"/></g><g transform="translate(1077.98,282.00)"><use href="#hG"/><use href="#mssqlG"/></g><g transform="translate(1139.75,282.00)"><use href="#hG"/><use href="#mssqlG"/></g><g transform="translate(1201.52,282.00)"><use href="#hR"/><use href="#altiR"/></g><g transform="translate(1263.29,282.00)"><use href="#hR"/><use href="#altiR"/></g><g transform="translate(1325.06,282.00)"><use href="#hR"/><use href="#altiR"/></g><g transform="translate(1386.83,282.00)"><use href="#hG"/><use href="#cubridG"/></g><g transform="translate(1448.60,282.00)"><use href="#hR"/><use href="#cubridR"/></g><g transform="translate(1510.37,282.00)"><use href="#hG"/><use href="#cubridG"/></g><g transform="translate(1572.14,282.00)"><use href="#hR"/><use href="#cubridR"/></g><g transform="translate(367.64,336.50)"><use href="#hR"/><use href="#cubridR"/></g><g transform="translate(429.41,336.50)"><use href="#hG"/><use href="#mongoG"/></g><g transform="translate(491.18,336.50)"><use href="#hG"/><use href="#redisG"/></g><g transform="translate(552.95,336.50)"><use href="#hR"/><use href="#mysqlR"/></g><g transform="translate(614.72,336.50)"><use href="#hR"/><use href="#oracleR"/></g><g transform="translate(676.49,336.50)"><use href="#hR"/><use href="#pgSR"/></g><g transform="translate(738.26,336.50)"><use href="#hR"/><use href="#pgPR"/></g><g transform="translate(800.03,336.50)"><use href="#hR"/><use href="#pgR"/></g><g transform="translate(861.80,336.50)"><use href="#hR"/><use href="#pgR"/></g><g transform="translate(923.57,336.50)"><use href="#hR"/><use href="#pgR"/></g><g transform="translate(985.34,336.50)"><use href="#hG"/><use href="#pgG"/></g><g transform="translate(1047.11,336.50)"><use href="#hG"/><use href="#pgG"/></g><g transform="translate(1108.88,336.50)"><use href="#hG"/><use href="#pgG"/></g><g transform="translate(1170.65,336.50)"><use href="#hG"/><use href="#pgG"/></g><g transform="translate(1232.42,336.50)"><use href="#hG"/><use href="#pgG"/></g><g transform="translate(1294.19,336.50)"><use href="#hG"/><use href="#pgG"/></g><g transform="translate(1355.96,336.50)"><use href="#hG"/><use href="#pgG"/></g><g transform="translate(1417.73,336.50)"><use href="#hG"/><use href="#pgG"/></g><g transform="translate(1479.50,336.50)"><use href="#hG"/><use href="#pgG"/></g><g transform="translate(1541.27,336.50)"><use href="#hR"/><use href="#mysqlR"/></g><g transform="translate(1603.04,336.50)"><use href="#hR"/><use href="#pgSR"/></g><g transform="translate(336.74,391.00)"><use href="#hR"/><use href="#pgSR"/></g><g transform="translate(398.51,391.00)"><use href="#hG"/><use href="#mysqlG"/></g><g transform="translate(460.28,391.00)"><use href="#hR"/><use href="#pgR"/></g><g transform="translate(522.05,391.00)"><use href="#hR"/><use href="#pgR"/></g><g transform="translate(583.82,391.00)"><use href="#hR"/><use href="#pgR"/></g><g transform="translate(645.59,391.00)"><use href="#hR"/><use href="#pgR"/></g><g transform="translate(707.36,391.00)"><use href="#hR"/><use href="#pgR"/></g><g transform="translate(769.13,391.00)"><use href="#hR"/><use href="#pgR"/></g><g transform="translate(830.90,391.00)"><use href="#hR"/><use href="#pgR"/></g><g transform="translate(892.67,391.00)"><use href="#hR"/><use href="#pgR"/></g><g transform="translate(954.44,391.00)"><use href="#hR"/><use href="#pgR"/></g><g transform="translate(1016.21,391.00)"><use href="#hR"/><use href="#pgR"/></g><g transform="translate(1077.98,391.00)"><use href="#hR"/><use href="#pgR"/></g><g transform="translate(1139.75,391.00)"><use href="#hR"/><use href="#pgR"/></g><g transform="translate(1201.52,391.00)"><use href="#hR"/><use href="#pgR"/></g><g transform="translate(1263.29,391.00)"><use href="#hR"/><use href="#pgR"/></g><g transform="translate(1325.06,391.00)"><use href="#hR"/><use href="#pgR"/></g><g transform="translate(1386.83,391.00)"><use href="#hR"/><use href="#pgR"/></g><g transform="translate(1448.60,391.00)"><use href="#hR"/><use href="#redshiftR"/></g><g transform="translate(1510.37,391.00)"><use href="#hG"/><use href="#mongoG"/></g><g transform="translate(1572.14,391.00)"><use href="#hR"/><use href="#mysqlR"/></g><g transform="translate(367.64,445.50)"><use href="#hG"/><use href="#mysqlG"/></g><g transform="translate(429.41,445.50)"><use href="#hG"/><use href="#mysqlG"/></g><g transform="translate(491.18,445.50)"><use href="#hG"/><use href="#mysqlG"/></g><g transform="translate(552.95,445.50)"><use href="#hG"/><use href="#mysqlG"/></g><g transform="translate(614.72,445.50)"><use href="#hG"/><use href="#mysqlG"/></g><g transform="translate(676.49,445.50)"><use href="#hG"/><use href="#mysqlG"/></g><g transform="translate(738.26,445.50)"><use href="#hG"/><use href="#mysqlG"/></g><g transform="translate(800.03,445.50)"><use href="#hG"/><use href="#mysqlG"/></g><g transform="translate(861.80,445.50)"><use href="#hG"/><use href="#mysqlG"/></g><g transform="translate(923.57,445.50)"><use href="#hG"/><use href="#mysqlG"/></g><g transform="translate(985.34,445.50)"><use href="#hR"/><use href="#pgR"/></g><g transform="translate(1047.11,445.50)"><use href="#hR"/><use href="#pgSR"/></g><g transform="translate(1108.88,445.50)"><use href="#hR"/><use href="#oracleR"/></g><g transform="translate(1170.65,445.50)"><use href="#hR"/><use href="#oracleR"/></g><g transform="translate(1232.42,445.50)"><use href="#hG"/><use href="#mysqlG"/></g><g transform="translate(1294.19,445.50)"><use href="#hG"/><use href="#mysqlG"/></g><g transform="translate(1355.96,445.50)"><use href="#hR"/><use href="#oracleR"/></g><g transform="translate(1417.73,445.50)"><use href="#hR"/><use href="#redshiftR"/></g><g transform="translate(1479.50,445.50)"><use href="#hR"/><use href="#tiberoR"/></g><g transform="translate(1541.27,445.50)"><use href="#hR"/><use href="#tiberoR"/></g><g transform="translate(1603.04,445.50)"><use href="#hR"/><use href="#oracleR"/></g></svg><span class="b" style="left:268px;top:522px;font-size:11.5px;letter-spacing:-.74px">인스턴스 목록</span><div style="left:1663.6px;top:529px;width:2.2px;height:2.2px;border-radius:2px;background:#a3a8b1"></div><div style="left:1668.0px;top:529px;width:2.2px;height:2.2px;border-radius:2px;background:#a3a8b1"></div><div style="left:1672.4px;top:529px;width:2.2px;height:2.2px;border-radius:2px;background:#a3a8b1"></div><div style="left:266.3px;top:546.3px;width:90px;height:24.5px;border:1px solid #c9cdd4;border-radius:2px;background:#fff"><span class="c" style="left:6px;top:5px">OR</span><svg width="7" height="5" viewBox="0 0 7 5" style="left:76px;top:9.5px"><path d="M.4,.4 H6.6 L3.5,4.6 Z" fill="#555a63"/></svg></div><div style="left:356.5px;top:546.3px;width:1325.2px;height:24.5px;border:1px solid #c9cdd4;border-radius:2px;background:#fff"><svg width="15" height="11" viewBox="0 0 15 11" style="left:6.5px;top:6.5px"><path d="M.5,1 H14.5 M3,5.3 H12 M5.8,9.6 H9.2" stroke="#555a63" stroke-width="1.3" fill="none"/></svg><svg width="13" height="13" viewBox="0 0 13 13" style="left:33px;top:5.5px"><path d="M7.2,1.2 L11.6,5.6 L10.4,6 L8.4,8.4 L7.4,10.4 L2.6,5.6 L4.6,4.6 L6.8,2.4 Z M4.9,8.1 L1.2,11.8" fill="none" stroke="#555a63" stroke-width="1.1" stroke-linejoin="round"/></svg></div><div style="left:0;top:616px;width:1676px;height:382px;overflow:hidden"><div style="left:0;top:-616px;width:1683px;height:998px"><svg width="13.2" height="13.2" viewBox="0 0 13 13" style="left:318.4px;top:614.6px"><path d="M6.5,.9 L8.2,4.6 L12.3,5.1 L9.3,7.9 L10.1,12 L6.5,10 L2.9,12 L3.7,7.9 L.7,5.1 L4.8,4.6 Z" fill="none" stroke="#555a63" stroke-width="1.25" stroke-linejoin="round"/></svg><span class="c" style="left:339.2px;top:614.4px;color:#5878f2;letter-spacing:-0.233px">mysql-6 9.4.0</span><svg width="18" height="15" viewBox="0 0 18 15" style="left:413.2px;top:615.9px"><path d="M.5,.3 C.6,3 .9,5.4 1.5,6.8 C2.2,8 3.4,8.4 4.6,9.1 L6.2,10.7 M7.7,.3 C9.4,2 10.4,4.2 11.6,6.1 C12.8,7.6 14.6,8.2 16.2,9.1 L13.1,11.5 L16.2,13.8" fill="none" stroke="#4f5a68" stroke-width="1" stroke-linecap="round" stroke-linejoin="round"/></svg><span class="c" style="left:632px;width:108px;text-align:center;top:614.4px">empty</span><span class="c" style="left:856.6px;top:614.4px">MySQL</span><span class="c" style="left:964.6px;top:614.4px">9.4.0</span><div class="bd bN" style="left:1077.0px;top:614.6px">No Signal</div><div class="bd bO" style="left:1167.0px;top:614.6px">Normal</div><div class="bar" style="left:1251.9px;top:615.0px"><i style="width:0.0px"></i></div><span class="bt" style="left:1251.9px;top:613.5px">0</span><div class="bar" style="left:1369.0px;top:615.0px"><i style="width:0.0px"></i></div><span class="bt" style="left:1369.0px;top:613.5px">0</span><div class="mv" style="left:1601.4px;top:615.2px;width:78.4px"><span style="left:5.6px;top:-.5px">Single View</span><svg width="5" height="8" viewBox="0 0 5 8" style="left:63.6px;top:3px"><path d="M1,1 L4,4 L1,7" fill="none" stroke="#4a4f57" stroke-width="1.1"/></svg></div><div class="hl" style="left:266px;top:635px;width:1410px;background:#c9cdd4"></div><svg width="11" height="7" viewBox="0 0 11 7" style="left:276.5px;top:647.4px"><path d="M.2,.2 H10.8 L5.5,6.6 Z" fill="#555a64"/></svg><span class="c" style="left:293.1px;top:643.1px;color:#25282d;letter-spacing:-0.38px">Oracle</span><div class="mv" style="left:1604.2px;top:643.9px;width:70.6px"><span style="left:5.5px;top:-.5px">Multi View</span><svg width="5" height="8" viewBox="0 0 5 8" style="left:58.5px;top:3px"><path d="M1,1 L4,4 L1,7" fill="none" stroke="#4a4f57" stroke-width="1.1"/></svg></div><div class="hl" style="left:266px;top:665px;width:1410px;background:#c9cdd4"></div><svg width="13.4" height="13.4" viewBox="0 0 13 13" style="left:296.3px;top:673.2px"><path d="M6.5,.9 L8.2,4.6 L12.3,5.1 L9.3,7.9 L10.1,12 L6.5,10 L2.9,12 L3.7,7.9 L.7,5.1 L4.8,4.6 Z" fill="#f0a111" stroke="#f0a111" stroke-width=".8" stroke-linejoin="round"/></svg><span class="c" style="left:317.2px;top:673.1px;color:#5878f2;letter-spacing:-0.246px">57 oracle 19</span><svg width="19" height="13" viewBox="0 0 19 13" style="left:383.7px;top:673.5px"><rect x="1.2" y="1.3" width="16.4" height="9.8" rx="4.9" fill="none" stroke="#e8051b" stroke-width="1.9"/></svg><span class="c" style="left:505.6px;top:673.1px;letter-spacing:-0.3px">hp - 57 oracle 19 alias</span><span class="c" style="left:632px;width:108px;text-align:center;top:673.1px">empty</span><span class="c" style="left:856.6px;top:673.1px">Oracle</span><span class="c" style="left:964.6px;top:673.1px">19.0.0.0.0</span><div class="bd bA" style="left:1077.0px;top:673.3px">Active</div><div class="bd bC" style="left:1167.0px;top:673.3px">Critical</div><div class="bar" style="left:1251.9px;top:673.7px"><i style="width:0.0px"></i></div><span class="bt" style="left:1251.9px;top:672.2px">0</span><div class="bar" style="left:1369.0px;top:673.7px"><i style="width:0.0px"></i></div><span class="bt" style="left:1369.0px;top:672.2px">0</span><span class="c" style="left:1500px;width:79.3px;text-align:right;top:673.1px">0</span><div class="hl" style="left:266px;top:695px;width:1410px;background:#c9cdd4"></div><svg width="11" height="7" viewBox="0 0 11 7" style="left:298.5px;top:707.4px"><path d="M.2,.2 H10.8 L5.5,6.6 Z" fill="#555a64"/></svg><span class="c" style="left:315.1px;top:703.1px;color:#25282d;letter-spacing:-0.33px">Oracle Cluster</span><div class="hl" style="left:266px;top:725px;width:1410px;background:#c9cdd4"></div><svg width="13.2" height="13.2" viewBox="0 0 13 13" style="left:318.4px;top:733.3px"><path d="M6.5,.9 L8.2,4.6 L12.3,5.1 L9.3,7.9 L10.1,12 L6.5,10 L2.9,12 L3.7,7.9 L.7,5.1 L4.8,4.6 Z" fill="none" stroke="#555a63" stroke-width="1.25" stroke-linejoin="round"/></svg><span class="c" style="left:339.2px;top:733.1px;color:#5878f2;letter-spacing:-0.647px">PROD11P</span><svg width="19" height="13" viewBox="0 0 19 13" style="left:393.2px;top:733.5px"><rect x="1.2" y="1.3" width="16.4" height="9.8" rx="4.9" fill="none" stroke="#e8051b" stroke-width="1.9"/></svg><span class="c" style="left:505.6px;top:733.1px;letter-spacing:-0.3px">linux - PROD11P alias</span><span class="c" style="left:632px;width:108px;text-align:center;top:733.1px">empty</span><span class="c" style="left:856.6px;top:733.1px">Oracle</span><span class="c" style="left:964.6px;top:733.1px">11.2.0.4.0</span><div class="bd bA" style="left:1077.0px;top:733.3px">Active</div><div class="bd bC" style="left:1167.0px;top:733.3px">Critical</div><div class="bar" style="left:1251.9px;top:733.7px"><i style="width:4.0px"></i></div><span class="bt" style="left:1251.9px;top:732.2px">3.515</span><div class="bar" style="left:1369.0px;top:733.7px"><i style="width:16.9px"></i></div><span class="bt" style="left:1369.0px;top:732.2px">16.211</span><span class="c" style="left:1500px;width:79.3px;text-align:right;top:733.1px">4</span><div class="hl" style="left:266px;top:755px;width:1410px;background:#c9cdd4"></div><svg width="13.4" height="13.4" viewBox="0 0 13 13" style="left:318.3px;top:762.7px"><path d="M6.5,.9 L8.2,4.6 L12.3,5.1 L9.3,7.9 L10.1,12 L6.5,10 L2.9,12 L3.7,7.9 L.7,5.1 L4.8,4.6 Z" fill="#f0a111" stroke="#f0a111" stroke-width=".8" stroke-linejoin="round"/></svg><span class="c" style="left:339.2px;top:762.6px;color:#5878f2;letter-spacing:-0.953px">PRODRAC1P</span><svg width="19" height="13" viewBox="0 0 19 13" style="left:408.7px;top:763.0px"><rect x="1.2" y="1.3" width="16.4" height="9.8" rx="4.9" fill="none" stroke="#e8051b" stroke-width="1.9"/></svg><span class="c" style="left:505.6px;top:762.6px;letter-spacing:-0.56px">win - PRODRAC1P ali...</span><span class="c" style="left:632px;width:108px;text-align:center;top:762.6px">OPEN</span><span class="c" style="left:856.6px;top:762.6px">Oracle</span><span class="c" style="left:964.6px;top:762.6px">12.1.0.2.0</span><div class="bd bA" style="left:1077.0px;top:762.8px">Active</div><div class="bd bC" style="left:1167.0px;top:762.8px">Critical</div><div class="bar" style="left:1251.9px;top:763.2px"><i style="width:4.0px"></i></div><span class="bt" style="left:1251.9px;top:761.7px">3.515</span><div class="bar" style="left:1369.0px;top:763.2px"><i style="width:16.9px"></i></div><span class="bt" style="left:1369.0px;top:761.7px">16.211</span><span class="c" style="left:1500px;width:79.3px;text-align:right;top:762.6px">0</span><div class="hl" style="left:266px;top:784px;width:1410px;background:#c9cdd4"></div><svg width="13.2" height="13.2" viewBox="0 0 13 13" style="left:296.4px;top:792.3px"><path d="M6.5,.9 L8.2,4.6 L12.3,5.1 L9.3,7.9 L10.1,12 L6.5,10 L2.9,12 L3.7,7.9 L.7,5.1 L4.8,4.6 Z" fill="none" stroke="#555a63" stroke-width="1.25" stroke-linejoin="round"/></svg><span class="c" style="left:317.2px;top:792.1px;color:#5878f2;letter-spacing:-1.405px">XE</span><svg width="19" height="13" viewBox="0 0 19 13" style="left:333.8px;top:792.5px"><rect x="1.2" y="1.3" width="16.4" height="9.8" rx="4.9" fill="none" stroke="#e8051b" stroke-width="1.9"/></svg><span class="c" style="left:632px;width:108px;text-align:center;top:792.1px">empty</span><span class="c" style="left:856.6px;top:792.1px">Oracle</span><span class="c" style="left:964.6px;top:792.1px">21.0.0.0.0</span><div class="bd bN" style="left:1077.0px;top:792.3px">No Signal</div><div class="bd bC" style="left:1167.0px;top:792.3px">Critical</div><div class="bar" style="left:1251.9px;top:792.7px"><i style="width:62.9px"></i></div><span class="bt" style="left:1251.9px;top:791.2px">61.32</span><div class="bar" style="left:1369.0px;top:792.7px"><i style="width:33.6px"></i></div><span class="bt" style="left:1369.0px;top:791.2px">32.505</span><div class="hl" style="left:266px;top:814px;width:1410px;background:#c9cdd4"></div><svg width="13.2" height="13.2" viewBox="0 0 13 13" style="left:296.4px;top:822.3px"><path d="M6.5,.9 L8.2,4.6 L12.3,5.1 L9.3,7.9 L10.1,12 L6.5,10 L2.9,12 L3.7,7.9 L.7,5.1 L4.8,4.6 Z" fill="none" stroke="#555a63" stroke-width="1.25" stroke-linejoin="round"/></svg><span class="c" style="left:317.2px;top:822.1px;color:#5878f2;letter-spacing:-0.216px">rac 4</span><svg width="19" height="13" viewBox="0 0 19 13" style="left:346.2px;top:822.5px"><rect x="1.2" y="1.3" width="16.4" height="9.8" rx="4.9" fill="none" stroke="#e8051b" stroke-width="1.9"/></svg><span class="c" style="left:632px;width:108px;text-align:center;top:822.1px">empty</span><span class="c" style="left:856.6px;top:822.1px">Oracle</span><span class="c" style="left:964.6px;top:822.1px">12.1.0.2.0</span><div class="bd bA" style="left:1077.0px;top:822.3px">Active</div><div class="bd bC" style="left:1167.0px;top:822.3px">Critical</div><div class="bar" style="left:1251.9px;top:822.7px"><i style="width:0.0px"></i></div><span class="bt" style="left:1251.9px;top:821.2px">0</span><div class="bar" style="left:1369.0px;top:822.7px"><i style="width:0.0px"></i></div><span class="bt" style="left:1369.0px;top:821.2px">0</span><span class="c" style="left:1500px;width:79.3px;text-align:right;top:822.1px">1</span><div class="hl" style="left:266px;top:844px;width:1410px;background:#c9cdd4"></div><svg width="11" height="7" viewBox="0 0 11 7" style="left:276.5px;top:856.4px"><path d="M.2,.2 H10.8 L5.5,6.6 Z" fill="#555a64"/></svg><span class="c" style="left:293.1px;top:852.1px;color:#25282d;letter-spacing:-0.4px">PG Cluster</span><div class="mv" style="left:1604.2px;top:852.9px;width:70.6px"><span style="left:5.5px;top:-.5px">Multi View</span><svg width="5" height="8" viewBox="0 0 5 8" style="left:58.5px;top:3px"><path d="M1,1 L4,4 L1,7" fill="none" stroke="#4a4f57" stroke-width="1.1"/></svg></div><div class="hl" style="left:266px;top:874px;width:1410px;background:#c9cdd4"></div><svg width="13.2" height="13.2" viewBox="0 0 13 13" style="left:296.4px;top:882.3px"><path d="M6.5,.9 L8.2,4.6 L12.3,5.1 L9.3,7.9 L10.1,12 L6.5,10 L2.9,12 L3.7,7.9 L.7,5.1 L4.8,4.6 Z" fill="none" stroke="#555a63" stroke-width="1.25" stroke-linejoin="round"/></svg><span class="c" style="left:317.2px;top:882.1px;color:#5878f2;letter-spacing:-0.170px">60 pg cluster</span><svg width="18" height="18" viewBox="0 0 18 18" style="left:387.1px;top:881.4px"><path d="M2.9,.5 C1.6,.9 .8,1.6 .6,2.6 C.2,4.4 .6,7 1.4,9.2 C2,10.8 2.6,11.8 3.2,12.5 C3.8,13.2 4.3,13.6 4.8,13.4 C5.4,13.1 6,12.2 6.5,11.7 C7.2,12.2 7.9,12.6 8.3,13.2 L8.7,15.3 C8.8,16.4 9,17.1 9.5,17.5 C10.1,17.9 11,17.9 11.7,17.8 C12.5,17.6 13.1,17.3 13.4,16.7 C13.7,15.8 13.6,14.4 13.7,13.2 C14.6,13.1 15.5,12.6 16.2,12.1 L17.6,11.4 L15.9,10.3 C16.5,9.2 17,7.6 17.3,6.3 C17.6,5.2 17.8,4 17.6,3.1 C17.4,2.1 16.9,1.4 16.2,.9 C15.5,.5 14.6,.3 13.7,.3 C12.7,.2 11.7,.3 10.8,.6 C9.6,.3 8.4,.2 7.2,.3 C5.8,.1 4.2,.1 2.9,.5 Z" fill="#3a6796" stroke="#4d5662" stroke-width=".9" stroke-linejoin="round"/><path d="M5.8,1 C5.1,2.2 5,3.4 5.1,4.5 C5.1,6 5.2,7.6 5.4,8.8 C5.7,10 6.2,10.9 6.9,11.4 M6.9,4.6 H7.9 C8.2,5.8 8.3,7 8.3,8.1 L8.7,12.5 M11.9,1 C13.2,1.6 14.1,2.7 14.4,3.8 C14.6,5 14.2,6.2 14.1,7.4 C14.2,8.6 14.6,9.6 15.2,10.3 M12.6,5.6 C13.2,5.8 13.5,6.2 13.4,6.7 L13,8.8" fill="none" stroke="#cfdbe8" stroke-width=".75" stroke-linecap="round"/></svg><span class="c" style="left:632px;width:108px;text-align:center;top:882.1px">empty</span><span class="c" style="left:856.6px;top:882.1px">PostgreSQL</span><span class="c" style="left:964.6px;top:882.1px">14</span><div class="bd bA" style="left:1077.0px;top:882.3px">Active</div><div class="bd bC" style="left:1167.0px;top:882.3px">Critical</div><div class="bar" style="left:1251.9px;top:882.7px"><i style="width:0.0px"></i></div><span class="bt" style="left:1251.9px;top:881.2px">0</span><div class="bar" style="left:1369.0px;top:882.7px"><i style="width:0.0px"></i></div><span class="bt" style="left:1369.0px;top:881.2px">0</span><span class="c" style="left:1500px;width:79.3px;text-align:right;top:882.1px">29</span><div class="mv" style="left:1601.4px;top:882.9px;width:78.4px"><span style="left:5.6px;top:-.5px">Single View</span><svg width="5" height="8" viewBox="0 0 5 8" style="left:63.6px;top:3px"><path d="M1,1 L4,4 L1,7" fill="none" stroke="#4a4f57" stroke-width="1.1"/></svg></div><div class="hl" style="left:266px;top:904px;width:1410px;background:#c9cdd4"></div><svg width="13.2" height="13.2" viewBox="0 0 13 13" style="left:296.4px;top:911.8px"><path d="M6.5,.9 L8.2,4.6 L12.3,5.1 L9.3,7.9 L10.1,12 L6.5,10 L2.9,12 L3.7,7.9 L.7,5.1 L4.8,4.6 Z" fill="none" stroke="#555a63" stroke-width="1.25" stroke-linejoin="round"/></svg><span class="c" style="left:317.2px;top:911.6px;color:#5878f2;letter-spacing:-0.168px">70 pg 14 cluster</span><svg width="18" height="18" viewBox="0 0 18 18" style="left:403.3px;top:910.9px"><path d="M2.9,.5 C1.6,.9 .8,1.6 .6,2.6 C.2,4.4 .6,7 1.4,9.2 C2,10.8 2.6,11.8 3.2,12.5 C3.8,13.2 4.3,13.6 4.8,13.4 C5.4,13.1 6,12.2 6.5,11.7 C7.2,12.2 7.9,12.6 8.3,13.2 L8.7,15.3 C8.8,16.4 9,17.1 9.5,17.5 C10.1,17.9 11,17.9 11.7,17.8 C12.5,17.6 13.1,17.3 13.4,16.7 C13.7,15.8 13.6,14.4 13.7,13.2 C14.6,13.1 15.5,12.6 16.2,12.1 L17.6,11.4 L15.9,10.3 C16.5,9.2 17,7.6 17.3,6.3 C17.6,5.2 17.8,4 17.6,3.1 C17.4,2.1 16.9,1.4 16.2,.9 C15.5,.5 14.6,.3 13.7,.3 C12.7,.2 11.7,.3 10.8,.6 C9.6,.3 8.4,.2 7.2,.3 C5.8,.1 4.2,.1 2.9,.5 Z" fill="#3a6796" stroke="#4d5662" stroke-width=".9" stroke-linejoin="round"/><path d="M5.8,1 C5.1,2.2 5,3.4 5.1,4.5 C5.1,6 5.2,7.6 5.4,8.8 C5.7,10 6.2,10.9 6.9,11.4 M6.9,4.6 H7.9 C8.2,5.8 8.3,7 8.3,8.1 L8.7,12.5 M11.9,1 C13.2,1.6 14.1,2.7 14.4,3.8 C14.6,5 14.2,6.2 14.1,7.4 C14.2,8.6 14.6,9.6 15.2,10.3 M12.6,5.6 C13.2,5.8 13.5,6.2 13.4,6.7 L13,8.8" fill="none" stroke="#cfdbe8" stroke-width=".75" stroke-linecap="round"/></svg><span class="c" style="left:632px;width:108px;text-align:center;top:911.6px">empty</span><span class="c" style="left:856.6px;top:911.6px">PostgreSQL</span><span class="c" style="left:964.6px;top:911.6px">14</span><div class="bd bA" style="left:1077.0px;top:911.8px">Active</div><div class="bd bC" style="left:1167.0px;top:911.8px">Critical</div><div class="bar" style="left:1251.9px;top:912.2px"><i style="width:0.0px"></i></div><span class="bt" style="left:1251.9px;top:910.7px">0</span><div class="bar" style="left:1369.0px;top:912.2px"><i style="width:0.0px"></i></div><span class="bt" style="left:1369.0px;top:910.7px">0</span><span class="c" style="left:1500px;width:79.3px;text-align:right;top:911.6px">0</span><div class="mv" style="left:1601.4px;top:912.4px;width:78.4px"><span style="left:5.6px;top:-.5px">Single View</span><svg width="5" height="8" viewBox="0 0 5 8" style="left:63.6px;top:3px"><path d="M1,1 L4,4 L1,7" fill="none" stroke="#4a4f57" stroke-width="1.1"/></svg></div><div class="hl" style="left:266px;top:933px;width:1410px;background:#c9cdd4"></div><svg width="11" height="7" viewBox="0 0 11 7" style="left:276.5px;top:945.4px"><path d="M.2,.2 H10.8 L5.5,6.6 Z" fill="#555a64"/></svg><span class="c" style="left:293.1px;top:941.1px;color:#25282d;letter-spacing:-1.0px">PG_Rep</span><div class="mv" style="left:1604.2px;top:941.9px;width:70.6px"><span style="left:5.5px;top:-.5px">Multi View</span><svg width="5" height="8" viewBox="0 0 5 8" style="left:58.5px;top:3px"><path d="M1,1 L4,4 L1,7" fill="none" stroke="#4a4f57" stroke-width="1.1"/></svg></div><div class="hl" style="left:266px;top:963px;width:1410px;background:#c9cdd4"></div><svg width="13.2" height="13.2" viewBox="0 0 13 13" style="left:296.4px;top:971.3px"><path d="M6.5,.9 L8.2,4.6 L12.3,5.1 L9.3,7.9 L10.1,12 L6.5,10 L2.9,12 L3.7,7.9 L.7,5.1 L4.8,4.6 Z" fill="none" stroke="#555a63" stroke-width="1.25" stroke-linejoin="round"/></svg><span class="c" style="left:317.2px;top:971.1px;color:#5878f2;letter-spacing:-0.224px">129 pg primary</span><svg width="18" height="18" viewBox="0 0 18 18" style="left:397.5px;top:970.4px"><path d="M2.9,.5 C1.6,.9 .8,1.6 .6,2.6 C.2,4.4 .6,7 1.4,9.2 C2,10.8 2.6,11.8 3.2,12.5 C3.8,13.2 4.3,13.6 4.8,13.4 C5.4,13.1 6,12.2 6.5,11.7 C7.2,12.2 7.9,12.6 8.3,13.2 L8.7,15.3 C8.8,16.4 9,17.1 9.5,17.5 C10.1,17.9 11,17.9 11.7,17.8 C12.5,17.6 13.1,17.3 13.4,16.7 C13.7,15.8 13.6,14.4 13.7,13.2 C14.6,13.1 15.5,12.6 16.2,12.1 L17.6,11.4 L15.9,10.3 C16.5,9.2 17,7.6 17.3,6.3 C17.6,5.2 17.8,4 17.6,3.1 C17.4,2.1 16.9,1.4 16.2,.9 C15.5,.5 14.6,.3 13.7,.3 C12.7,.2 11.7,.3 10.8,.6 C9.6,.3 8.4,.2 7.2,.3 C5.8,.1 4.2,.1 2.9,.5 Z" fill="#3a6796" stroke="#4d5662" stroke-width=".9" stroke-linejoin="round"/><path d="M5.8,1 C5.1,2.2 5,3.4 5.1,4.5 C5.1,6 5.2,7.6 5.4,8.8 C5.7,10 6.2,10.9 6.9,11.4 M6.9,4.6 H7.9 C8.2,5.8 8.3,7 8.3,8.1 L8.7,12.5 M11.9,1 C13.2,1.6 14.1,2.7 14.4,3.8 C14.6,5 14.2,6.2 14.1,7.4 C14.2,8.6 14.6,9.6 15.2,10.3 M12.6,5.6 C13.2,5.8 13.5,6.2 13.4,6.7 L13,8.8" fill="none" stroke="#cfdbe8" stroke-width=".75" stroke-linecap="round"/></svg><svg width="14" height="19" viewBox="0 0 14 19" style="left:418.4px;top:969.5px"><path d="M3.4,1.2 H10.6 V1.8 H3.4 Z M3.4,17.5 H10.6 V18 H3.4 Z" fill="#b9bcc2"/><rect x="1.2" y="1.5" width="11.4" height="16.1" rx="2.1" fill="#4b82f4" stroke="#2e3138" stroke-width=".95"/><path d="M2.6,3.2 H11.2" stroke="#a9c3fb" stroke-width="1" fill="none"/><path d="M5.2,13.6 V8.2 H7 C9,8.2 9,11 7,11 H5.2" fill="none" stroke="#fff" stroke-width="1.15"/></svg><span class="c" style="left:632px;width:108px;text-align:center;top:971.1px">empty</span><span class="c" style="left:856.6px;top:971.1px">PostgreSQL</span><span class="c" style="left:964.6px;top:971.1px">17</span><div class="bd bN" style="left:1077.0px;top:971.3px">No Signal</div><div class="bd bC" style="left:1167.0px;top:971.3px">Critical</div><div class="bar" style="left:1251.9px;top:971.7px"><i style="width:0.0px"></i></div><span class="bt" style="left:1251.9px;top:970.2px">0</span><div class="bar" style="left:1369.0px;top:971.7px"><i style="width:0.0px"></i></div><span class="bt" style="left:1369.0px;top:970.2px">0</span><div class="mv" style="left:1601.4px;top:971.9px;width:78.4px"><span style="left:5.6px;top:-.5px">Single View</span><svg width="5" height="8" viewBox="0 0 5 8" style="left:63.6px;top:3px"><path d="M1,1 L4,4 L1,7" fill="none" stroke="#4a4f57" stroke-width="1.1"/></svg></div><div class="hl" style="left:266px;top:993px;width:1410px;background:#c9cdd4"></div></div></div><div class="vl" style="left:266.0px;top:616px;height:382.0px"></div><div class="vl" style="left:496.7px;top:616px;height:382.0px"></div><div class="vl" style="left:631.5px;top:616px;height:382.0px"></div><div class="vl" style="left:739.5px;top:616px;height:382.0px"></div><div class="vl" style="left:848.0px;top:616px;height:382.0px"></div><div class="vl" style="left:956.1px;top:616px;height:382.0px"></div><div class="vl" style="left:1064.0px;top:616px;height:382.0px"></div><div class="vl" style="left:1153.8px;top:616px;height:382.0px"></div><div class="vl" style="left:1243.8px;top:616px;height:382.0px"></div><div class="vl" style="left:1360.6px;top:616px;height:382.0px"></div><div class="vl" style="left:1477.8px;top:616px;height:382.0px"></div><div class="vl" style="left:1586.0px;top:616px;height:382.0px"></div><div style="left:760px;top:617px;width:80px;height:382px;background:#fff"></div><div style="left:1676px;top:616px;width:5.6px;height:382px;background:#edf0f3"></div><div style="left:1676.3px;top:757px;width:4.2px;height:58.6px;border-radius:2.1px;background:#d5d8dd"></div><div class="vl" style="left:1681.2px;top:579px;height:419px;background:#c4c8cf"></div><div class="th" style="left:266.0px;width:231.2px"><span style="top:11px">Instance Name</span></div><div class="th" style="left:496.7px;width:135.3px"><span style="top:11px">Alias</span></div><div class="th" style="left:631.5px;width:108.5px"><span style="top:11px">Cluster:Role</span></div><div class="th" style="left:739.5px;width:109.0px"><span style="top:11px">Host IP</span></div><div class="th" style="left:848.0px;width:108.6px"><span style="top:11px">Engine</span></div><div class="th" style="left:956.1px;width:108.4px"><span style="top:11px">Version</span></div><div class="th" style="left:1064.0px;width:90.3px"><span style="top:11px">Status</span></div><div class="th" style="left:1153.8px;width:90.5px"><span style="top:11px">Alert</span></div><div class="th" style="left:1243.8px;width:117.3px"><span style="top:11px">CPU Usage (%)</span></div><div class="th" style="left:1360.6px;width:117.7px"><span style="top:11px">Memory Usage (%)</span></div><div class="th" style="left:1477.8px;width:108.7px"><span style="top:4px">Active Session<br>Count</span></div><div class="th" style="left:1586.0px;width:94.7px;overflow:hidden"><span style="top:11px;width:108.0px">Monitoring</span></div></body></html>
